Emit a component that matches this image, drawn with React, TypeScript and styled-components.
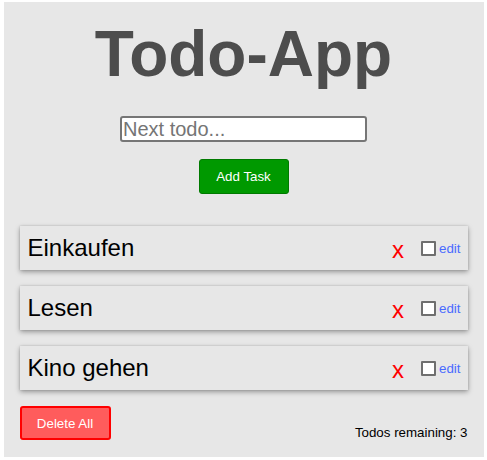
import React, { useState } from 'react';
import styled, { createGlobalStyle } from 'styled-components';

const GlobalStyle = createGlobalStyle`
  body {
    margin: 0;
    background: #ffffff;
    font-family: "Liberation Sans", Arial, sans-serif;
  }
`;

type Todo = { id: number; text: string; done: boolean };

const initialTodos: Todo[] = [
  { id: 1, text: 'Einkaufen', done: false },
  { id: 2, text: 'Lesen', done: false },
  { id: 3, text: 'Kino gehen', done: false },
];

export default function App() {
  const [todos, setTodos] = useState<Todo[]>(initialTodos);
  const [draft, setDraft] = useState('');

  const addTask = () => {
    if (!draft.trim()) return;
    setTodos([...todos, { id: Date.now(), text: draft.trim(), done: false }]);
    setDraft('');
  };

  const toggle = (id: number) =>
    setTodos(todos.map((t) => (t.id === id ? { ...t, done: !t.done } : t)));

  const remove = (id: number) => setTodos(todos.filter((t) => t.id !== id));

  const remaining = todos.filter((t) => !t.done).length;

  return (
    <>
      <GlobalStyle />
      <Wrapper>
        <Title>Todo-App</Title>
        <TodoInput
          placeholder="Next todo..."
          value={draft}
          onChange={(e) => setDraft(e.target.value)}
        />
        <AddButton onClick={addTask}>Add Task</AddButton>
        <List>
          {todos.map((todo) => (
            <Item key={todo.id}>
              <ItemText done={todo.done}>{todo.text}</ItemText>
              <Actions>
                <RemoveButton onClick={() => remove(todo.id)}>x</RemoveButton>
                <Check
                  type="checkbox"
                  checked={todo.done}
                  onChange={() => toggle(todo.id)}
                />
                <EditLink href="#">edit</EditLink>
              </Actions>
            </Item>
          ))}
        </List>
        <Footer>
          <DeleteButton onClick={() => setTodos([])}>Delete All</DeleteButton>
          <Remaining>Todos remaining: {remaining}</Remaining>
        </Footer>
      </Wrapper>
    </>
  );
}

const Wrapper = styled.div`
  width: 480px;
  margin: 2px auto 0;
  padding: 17px 16px 17px;
  box-sizing: border-box;
  background: #e7e7e7;
  display: flex;
  flex-direction: column;
  align-items: center;
`;

const Title = styled.h1`
  margin: 0;
  font-size: 64px;
  font-weight: bold;
  color: #4d4d4d;
  line-height: 71px;
`;

const TodoInput = styled.input`
  margin-top: 26px;
  width: 247px;
  height: 26px;
  box-sizing: border-box;
  padding: 0 1px;
  border: 2px solid #767676;
  border-radius: 3px;
  background: #ffffff;
  font-family: "Liberation Sans", Arial, sans-serif;
  font-size: 20px;
  color: #000000;
  outline: none;
  &::placeholder {
    color: #757575;
  }
`;

const AddButton = styled.button`
  margin-top: 17px;
  width: 90px;
  height: 35px;
  background: #009900;
  border: 1px solid #007a00;
  border-radius: 3px;
  color: #ffffff;
  font-family: "Liberation Sans", Arial, sans-serif;
  font-size: 13.33px;
  cursor: pointer;
`;

const List = styled.ul`
  list-style: none;
  margin: 32px 0 0;
  padding: 0;
  width: 100%;
  display: flex;
  flex-direction: column;
  gap: 16px;
`;

const Item = styled.li`
  display: flex;
  align-items: center;
  justify-content: space-between;
  height: 44px;
  box-sizing: border-box;
  padding: 0 7px 0 8px;
  background: #e7e7e7;
  box-shadow: 0 2px 5px rgba(0, 0, 0, 0.35), 0 0 2px rgba(0, 0, 0, 0.15);
`;

const ItemText = styled.span<{ done: boolean }>`
  font-size: 24px;
  color: #000000;
  text-decoration: ${(props) => (props.done ? 'line-through' : 'none')};
`;

const Actions = styled.div`
  display: flex;
  align-items: center;
`;

const RemoveButton = styled.button`
  border: none;
  background: none;
  padding: 0;
  margin: 4px 0 0;
  font-family: "Liberation Sans", Arial, sans-serif;
  font-size: 24px;
  line-height: 1;
  color: #ff0000;
  cursor: pointer;
`;

const Check = styled.input`
  appearance: none;
  margin: 0 3px 0 17px;
  width: 15px;
  height: 15px;
  box-sizing: border-box;
  border: 2px solid #6f6f6f;
  border-radius: 1px;
  background: #ffffff;
  cursor: pointer;
  &:checked {
    background: #4a6bff;
  }
`;

const EditLink = styled.a`
  font-size: 13.33px;
  color: #4a6bff;
  text-decoration: none;
`;

const Footer = styled.div`
  margin-top: 16px;
  width: 100%;
  display: flex;
  justify-content: space-between;
  align-items: flex-end;
`;

const DeleteButton = styled.button`
  width: 91px;
  height: 34px;
  background: #ff5c5c;
  border: 2px solid #ff0000;
  border-radius: 3px;
  color: #ffffff;
  font-family: "Liberation Sans", Arial, sans-serif;
  font-size: 13.33px;
  cursor: pointer;
`;

const Remaining = styled.span`
  font-size: 13.33px;
  color: #000000;
`;
